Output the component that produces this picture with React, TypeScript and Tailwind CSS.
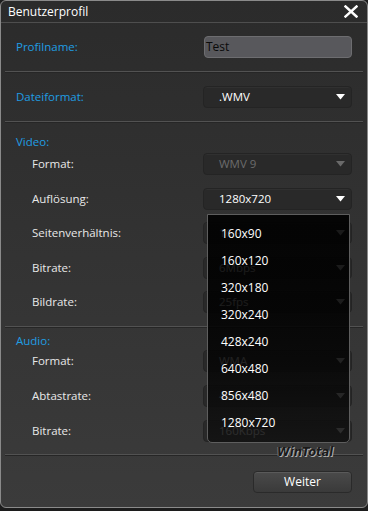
import React from "react";

const font = { fontFamily: '"Open Sans", "Noto Sans", sans-serif' };

function Arrow({ disabled }: { disabled?: boolean }) {
  return (
    <svg width="9" height="6" viewBox="0 0 9 6" className="shrink-0">
      <polygon points="0,0 9,0 4.5,5.5" fill={disabled ? "#6a6a6a" : "#ffffff"} />
    </svg>
  );
}

function Select({ value, disabled }: { value: string; disabled?: boolean }) {
  return (
    <div className="w-[149px] h-[22px] rounded-[4px] bg-[#292929] border border-[#242424] shadow-[inset_0_1px_0_#303030] flex items-center justify-between pl-[15px] pr-[6px]">
      <span className={disabled ? "text-[#6c6c6c]" : "text-white"}>{value}</span>
      <Arrow disabled={disabled} />
    </div>
  );
}

function Row({ label, children, sub }: { label: string; children: React.ReactNode; sub?: boolean }) {
  return (
    <div className="flex items-center justify-between h-[22px]">
      <span className={sub ? "pl-[16px] text-[#e8e8e8]" : "text-[#1f9de3]"}>{label}</span>
      {children}
    </div>
  );
}

function Sep() {
  return <div className="h-px bg-[#525252] mx-[-11px] shadow-[0_1px_0_#262626]" />;
}

const items = ["160x90", "160x120", "320x180", "320x240", "428x240", "640x480", "856x480", "1280x720"];

export default function App() {
  return (
    <div className="w-[368px] h-[511px] bg-[#1c1c1c] text-[11.5px] leading-[16px]" style={font}>
      <div className="relative w-[368px] h-[508px] border border-[#8a8a8a] rounded-[6px] bg-gradient-to-b from-[#2b2b2b] to-[#3b3b3b] overflow-hidden">
        {/* title */}
        <div className="h-[22px] flex items-center justify-between pl-[7px] pr-[9px] border-b border-[#4e4e4e]">
          <span className="text-white text-[12px]">Benutzerprofil</span>
          <svg width="14" height="13" viewBox="0 0 14 13">
            <path d="M1.5 1.5 L12.5 11.5 M12.5 1.5 L1.5 11.5" stroke="#fff" strokeWidth="2.4" strokeLinecap="square" />
          </svg>
        </div>
        <div className="px-[15px] pt-[13px] flex flex-col">
          <Row label="Profilname:">
            <div className="w-[148px] h-[22px] rounded-[4px] bg-[#58585c] border border-[#6d6d70] flex items-center pl-[1px] text-[#0a0a0a] text-[12px]">
              Test
            </div>
          </Row>
          <div className="h-[13px]" />
          <Sep />
          <div className="h-[14px]" />
          <Row label="Dateiformat:">
            <Select value=".WMV" />
          </Row>
          <div className="h-[13px]" />
          <Sep />
          <div className="h-[12px]" />
          <div className="text-[#1f9de3] h-[19px]">Video:</div>
          <div className="flex flex-col gap-[12.5px]">
            <Row label="Format:" sub>
              <Select value="WMV 9" disabled />
            </Row>
            <Row label="Auflösung:" sub>
              <Select value="1280x720" />
            </Row>
            <Row label="Seitenverhältnis:" sub>
              <Select value="16:9" />
            </Row>
            <Row label="Bitrate:" sub>
              <Select value="6Mbps" />
            </Row>
            <Row label="Bildrate:" sub>
              <Select value="25fps" />
            </Row>
          </div>
          <div className="h-[13px]" />
          <Sep />
          <div className="h-[6px]" />
          <div className="text-[#1f9de3] h-[17px]">Audio:</div>
          <div className="flex flex-col gap-[13px]">
            <Row label="Format:" sub>
              <Select value="WMA" />
            </Row>
            <Row label="Abtastrate:" sub>
              <Select value="44100Hz" />
            </Row>
            <Row label="Bitrate:" sub>
              <Select value="160Kbps" />
            </Row>
          </div>
          <div className="h-[12px]" />
          <div className="relative">
            <Sep />
            <span className="absolute left-[261px] top-[-8px] italic font-black text-[11.5px] leading-[13px] tracking-[0px] text-[#1a1a1a] [text-shadow:1px_1px_0_#b0b0b0,-1px_0_0_#707070]" style={{ fontFamily: '"DejaVu Sans", sans-serif' }}>
              WinTotal
            </span>
          </div>
          <div className="h-[16px]" />
          <div className="flex justify-end">
            <div className="w-[99px] h-[22px] rounded-[4px] bg-gradient-to-b from-[#4a4a4a] to-[#3a3a3a] border border-[#2a2a2a] shadow-[inset_0_1px_0_#5a5a5a] flex items-center justify-center text-white text-[12px]">
              Weiter
            </div>
          </div>
        </div>

        {/* dropdown */}
        <div className="absolute left-[206px] top-[213px] w-[143px] h-[229px] rounded-b-[5px] border border-[#5e5e5e] bg-gradient-to-b from-[#000000]/[0.9] to-[#121212]/[0.88] pt-[5px] pl-[13px] flex flex-col">
          {items.map((it) => (
            <div key={it} className="h-[27px] flex items-center text-white text-[12px]">
              {it}
            </div>
          ))}
        </div>
      </div>
    </div>
  );
}
